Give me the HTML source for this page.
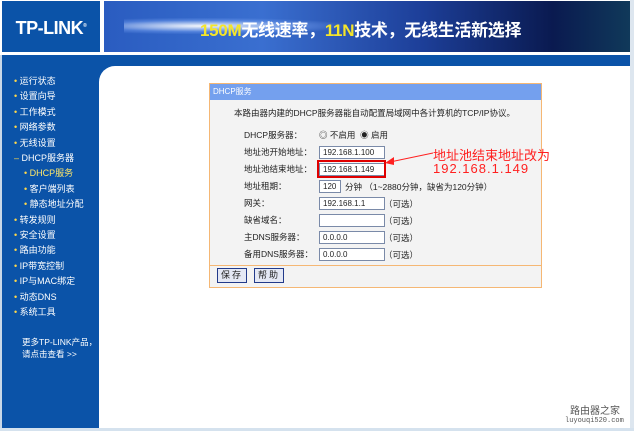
<!DOCTYPE html>
<html><head><meta charset="utf-8"><style>
*{margin:0;padding:0;box-sizing:border-box}
body{width:634px;height:431px;background:#fff;position:relative;overflow:hidden;font-family:"Liberation Sans","Noto Sans CJK SC",sans-serif;font-size:9px;color:#222}
.abs{position:absolute}
#logo{left:2px;top:1px;width:98px;height:51px;background:#0b53a8;color:#fff;font-weight:bold;font-size:18px;line-height:51px;text-align:center;letter-spacing:-0.5px}
#banner{left:104px;top:1px;width:528px;height:51px;background:linear-gradient(90deg,#2a5cc0 0%,#3a6fd0 30%,#1d3f99 60%,#0a1a50 85%,#103a5a 100%)}
#banner .glow{position:absolute;left:20px;top:17px;width:220px;height:16px;background:radial-gradient(ellipse at 35% 50%,rgba(255,255,255,.95),rgba(140,180,255,.35) 50%,transparent 75%)}
#banner .t{position:absolute;left:96px;top:15px;font-size:17px;color:#fff;font-weight:bold;white-space:nowrap;letter-spacing:-0.3px}
#banner .t b{color:#f4e52a}
#bar{left:2px;top:55px;width:628px;height:11px;background:#0b53a8}
#side{left:2px;top:55px;width:97px;height:373px;background:#0b53a8}
#corner{left:99px;top:66px;width:16px;height:16px;background:#0b53a8}
#corner:after{content:"";position:absolute;left:0;top:0;width:16px;height:16px;background:#fff;border-top-left-radius:16px}
#rs{left:630px;top:0;width:4px;height:431px;background:#dde6ef}
#bb{left:0;top:428px;width:634px;height:3px;background:#d5e2ee}
#lb{left:0;top:55px;width:2px;height:373px;background:#c9d8e8}
.menu{left:14px;top:74px;color:#fff;font-size:9px;line-height:15.4px;white-space:nowrap}
.menu div:before{content:"• ";color:#ffd84a}
.menu .sub{padding-left:10px}
.menu .act{color:#ffe76a}
.menu .minus:before{content:"– "}
.more{left:22px;top:334px;color:#fff;font-size:8.5px;line-height:12px}
#panel{left:209px;top:83px;width:333px;height:205px;border:1px solid #f5b774;background:#f3f3f3}
#ph{position:absolute;left:0;top:0;width:331px;height:16px;background:#74a0ee;color:#fff;font-size:8px;line-height:16px;padding-left:3px}
#sep{position:absolute;left:0;top:181px;width:331px;height:1px;background:#f5b774}
.lbl{position:absolute;left:34px;font-size:8.5px}
.inp{position:absolute;left:109px;width:66px;height:13px;background:#fff;border:1px solid #7a8aa8;font-size:8px;line-height:11px;padding-left:3px}
.opt{position:absolute;left:174px;font-size:8.5px}
.btn{position:absolute;top:184px;width:30px;height:15px;border:1px solid #223a8a;background:#e4e8f4;font-size:9px;text-align:center;line-height:13px;letter-spacing:2px}
.red{color:#ff2020;font-size:13px;white-space:nowrap}
</style></head><body>
<div class="abs" id="logo">TP-LINK<sup style="font-size:5px">®</sup></div>
<div class="abs" id="banner"><div class="glow"></div><div class="t"><b>150M</b>无线速率，<b>11N</b>技术，无线生活新选择</div></div>
<div class="abs" id="bar"></div>
<div class="abs" id="side"></div>
<div class="abs" id="lb"></div>
<div class="abs" id="corner"></div>
<div class="abs" id="rs"></div>
<div class="abs" id="bb"></div>
<div class="abs menu">
<div>运行状态</div><div>设置向导</div><div>工作模式</div><div>网络参数</div><div>无线设置</div>
<div class="minus">DHCP服务器</div>
<div class="sub act">DHCP服务</div><div class="sub">客户端列表</div><div class="sub">静态地址分配</div>
<div>转发规则</div><div>安全设置</div><div>路由功能</div><div>IP带宽控制</div><div>IP与MAC绑定</div><div>动态DNS</div><div>系统工具</div>
</div>
<div class="abs more" style="top:336px">更多TP-LINK产品，<br>请点击查看 &gt;&gt;</div>
<div class="abs" id="panel">
<div id="ph">DHCP服务</div>
<div class="lbl" style="left:24px;top:23px">本路由器内建的DHCP服务器能自动配置局域网中各计算机的TCP/IP协议。</div>
<div class="lbl" style="top:45px">DHCP服务器：</div>
<div class="lbl" style="left:109px;top:45px">◎ 不启用 &nbsp;◉ 启用</div>
<div class="lbl" style="top:62px">地址池开始地址：</div><div class="inp" style="top:62px">192.168.1.100</div>
<div class="lbl" style="top:79px">地址池结束地址：</div><div class="inp" style="top:79px">192.168.1.149</div>
<div style="position:absolute;left:107px;top:76px;width:69px;height:18px;border:2px solid #e00000"></div>
<div class="lbl" style="top:96px">地址租期：</div><div class="inp" style="top:96px;width:22px">120</div>
<div class="lbl" style="left:135px;top:97px">分钟 （1~2880分钟，缺省为120分钟）</div>
<div class="lbl" style="top:113px">网关：</div><div class="inp" style="top:113px">192.168.1.1</div><div class="opt" style="top:114px">（可选）</div>
<div class="lbl" style="top:130px">缺省域名：</div><div class="inp" style="top:130px"></div><div class="opt" style="top:131px">（可选）</div>
<div class="lbl" style="top:147px">主DNS服务器：</div><div class="inp" style="top:147px">0.0.0.0</div><div class="opt" style="top:148px">（可选）</div>
<div class="lbl" style="top:164px">备用DNS服务器：</div><div class="inp" style="top:164px">0.0.0.0</div><div class="opt" style="top:165px">（可选）</div>
<div id="sep"></div>
<div class="btn" style="left:7px">保存</div><div class="btn" style="left:44px">帮助</div>
</div>
<svg class="abs" style="left:380px;top:145px" width="60" height="25"><line x1="53" y1="8" x2="10" y2="17" stroke="#ff2020" stroke-width="1"/><polygon points="5,18 14,12 14,20" fill="#ff2020"/></svg>
<div class="abs red" style="left:433px;top:145px">地址池结束地址改为</div>
<div class="abs red" style="left:433px;top:161px;letter-spacing:1px">192.168.1.149</div>
<div class="abs" style="left:570px;top:402px;font-size:10px;color:#555">路由器之家</div>
<div class="abs" style="left:565px;top:417px;font-size:7px;color:#555;font-family:'Liberation Mono',monospace">luyouqi520.com</div>
</body></html>
